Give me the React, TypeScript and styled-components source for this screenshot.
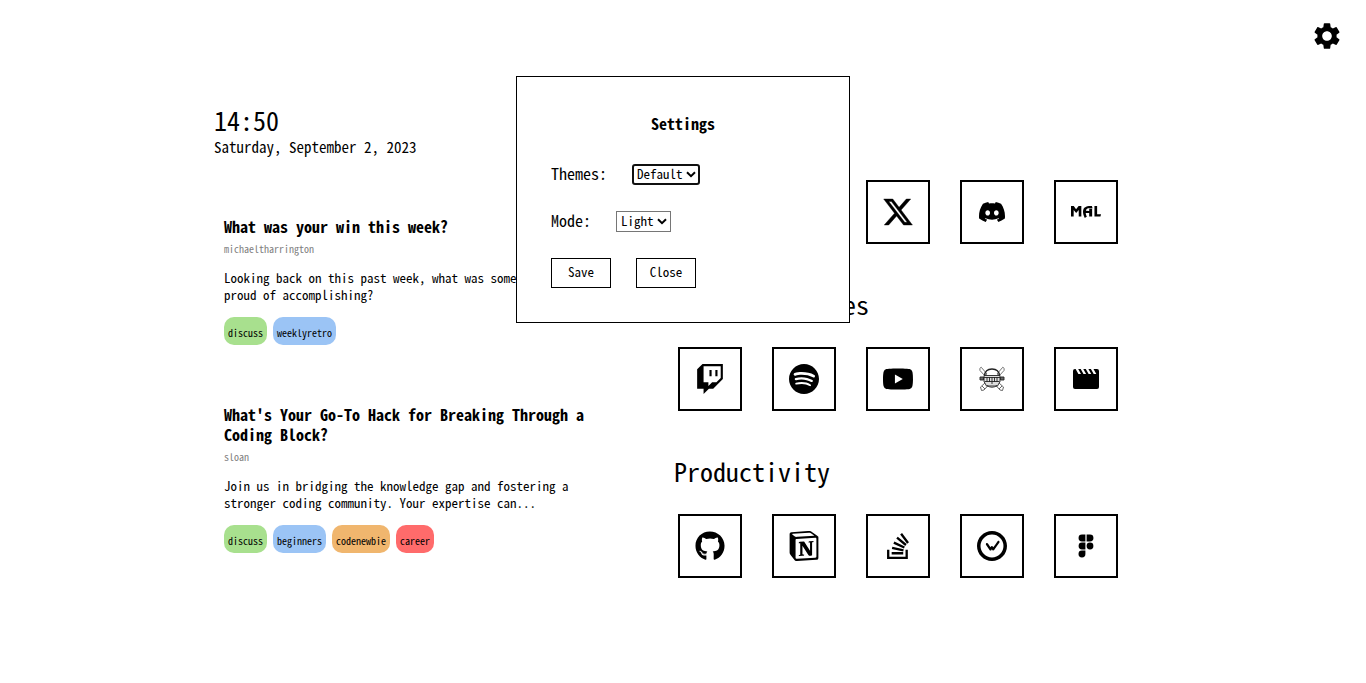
import React from 'react';
import styled, { createGlobalStyle, css } from 'styled-components';
import { FaGithub, FaInstagram, FaReddit } from 'react-icons/fa6';
import { MdSettings } from 'react-icons/md';
import {
  SiDiscord,
  SiMyanimelist,
  SiNotion,
  SiSpotify,
  SiStackoverflow,
  SiTwitch,
  SiWakatime,
  SiYoutube,
} from 'react-icons/si';

const GlobalStyle = createGlobalStyle`
  * { box-sizing: border-box; }
  body {
    margin: 0;
    background: #fff;
    color: #000;
  }
  body, button, select {
    font-family: "Noto Sans Mono CJK JP", "Noto Sans Mono CJK SC", "Liberation Mono", monospace;
  }
`;

const Page = styled.div`
  position: relative;
  padding: 106px 24px 40px;
`;

const SettingsButton = styled.button`
  position: absolute;
  top: 20px;
  right: 23px;
  display: flex;
  padding: 0;
  border: 0;
  background: none;
  color: #000;
  cursor: pointer;
`;

const Content = styled.main`
  display: grid;
  grid-template-columns: minmax(0, 390px) minmax(0, 478px);
  column-gap: 70px;
  max-width: 938px;
  margin: 0 auto;
`;

const Clock = styled.time`
  display: block;
  font-size: 26px;
  line-height: 28px;
`;

const Today = styled.p`
  margin: 3px 0 0;
  font-size: 15px;
  line-height: 20px;
`;

const Feed = styled.section`
  display: flex;
  flex-direction: column;
  gap: 59px;
  padding: 59px 0 0 10px;
`;

const PostTitle = styled.h2`
  margin: 0;
  font-size: 16px;
  line-height: 20px;
`;

const Author = styled.p`
  margin: 5px 0 12px;
  font-size: 10px;
  line-height: 16px;
  color: #808080;
`;

const Summary = styled.p`
  margin: 0;
  font-size: 13px;
  line-height: 17px;
`;

const Tags = styled.ul`
  display: flex;
  gap: 6px;
  margin: 14px 0 0;
  padding: 0;
  list-style: none;
`;

const Tag = styled.li<{ $color: string }>`
  padding: 8px 4px 4px;
  border-radius: 10px;
  background: ${({ $color }) => $color};
  font-size: 10px;
  line-height: 16px;
`;

const Links = styled.div`
  display: flex;
  flex-direction: column;
  gap: 46px;
  padding-top: 74px;
`;

const GroupTitle = styled.h2`
  margin: 0 0 29px;
  font-size: 26px;
  font-weight: 400;
  line-height: 28px;
`;

const Tiles = styled.div`
  display: flex;
  gap: 30px;
  padding-left: 4px;
`;

const Tile = styled.a`
  display: flex;
  flex: none;
  align-items: center;
  justify-content: center;
  width: 64px;
  height: 64px;
  border: 2px solid #000;
  color: #000;
`;

const Dialog = styled.dialog`
  position: absolute;
  top: 76px;
  width: 334px;
  margin: 0 auto;
  padding: 34px;
  border: 1px solid #000;
  background: #fff;
  color: #000;
`;

const DialogTitle = styled.h2`
  margin: 0 0 29px;
  font-size: 16px;
  line-height: 24px;
  text-align: center;
`;

const Field = styled.div`
  display: flex;
  align-items: center;
  gap: 25px;
  height: 21px;
  margin-bottom: 26px;
  font-size: 16px;
`;

const Label = styled.label`
  padding-bottom: 2px;
  line-height: 19px;
`;

const SelectBox = styled.div`
  position: relative;
  display: flex;

  svg {
    position: absolute;
    top: 7px;
    right: 4px;
    pointer-events: none;
  }
`;

const Select = styled.select<{ $active?: boolean }>`
  appearance: none;
  height: 21px;
  padding: 0 16px 2px 4px;
  border: 1px solid #767676;
  border-radius: 0;
  background: #fff;
  color: #000;
  font-size: 13px;
  line-height: 17px;
  ${({ $active }) =>
    $active &&
    css`
      padding: 0 15px 2px 3px;
      border: 2px solid #101010;
      border-radius: 3px;
      line-height: 15px;
    `}
`;

const Actions = styled.div`
  display: flex;
  gap: 25px;
`;

const Button = styled.button`
  width: 60px;
  height: 30px;
  padding: 0 0 3px;
  border: 1px solid #000;
  background: #fff;
  color: #000;
  font-size: 13px;
`;

const Chevron = () => (
  <svg width="10" height="7" viewBox="0 0 10 7" fill="none" stroke="#000" strokeWidth="2">
    <path d="M1 1.3 L5 5.2 L9 1.3" />
  </svg>
);

const XIcon = () => (
  <svg width="32" height="32" viewBox="0 0 24 24" fill="#000" stroke="#000" strokeWidth="0.3">
    <path d="M18.244 2.25h3.308l-7.227 8.26 8.502 11.24H16.17l-5.214-6.817L4.99 21.75H1.68l7.73-8.835L1.254 2.25H8.08l4.713 6.231zm-1.161 17.52h1.833L7.084 4.126H5.117z" />
  </svg>
);

const SkullIcon = () => (
  <svg width="26" height="26" viewBox="0 0 26 26" fill="none" stroke="#222" strokeWidth="0.9">
    <path d="M2.2 1.2 L8 8 L5.5 9.5 L1 4.5 Q0 2 2.2 1.2Z M23.8 1.2 L18 8 L20.5 9.5 L25 4.5 Q26 2 23.8 1.2Z" stroke="#666" />
    <path d="M6 17 L1.5 21 L2.5 24.5 L5 24 L9 19.5 M20 17 L24.5 21 L23.5 24.5 L21 24 L17 19.5 M3 20 L6 23 M23 20 L20 23" stroke="#555" />
    <path d="M5.5 10 Q6 3 13 3 Q20 3 20.5 10" strokeWidth="1.3" />
    <path d="M5 9.5 H21 V15.5 L18.5 20 H7.5 L5 15.5Z" fill="#ddd" />
    <path d="M5 11.5 H21 M5.5 15.5 H20.5 M8 11 V16 M10.5 11 V16 M13 11 V18 M15.5 11 V16 M18 11 V16 M8 19.5 Q13 23 18 19.5" />
    <path d="M1 11 H4.5 V14 H1Z M21.5 11 H25 V14 H21.5Z" fill="#666" />
  </svg>
);

const ClapperIcon = () => (
  <svg width="26" height="20" viewBox="0 0 26 20">
    <rect width="26" height="20" rx="2" fill="#000" />
    <path
      fill="#fff"
      d="M2.6 0 H5.2 L8 5 H5.4Z M7.7 0 H10.3 L13.1 5 H10.5Z M12.8 0 H15.4 L18.2 5 H15.6Z M17.9 0 H20.5 L23.3 5 H20.7Z"
    />
  </svg>
);

const FigmaIcon = () => (
  <svg width="16" height="24" viewBox="0 0 16 24" fill="#000">
    <path d="M7.4 .5 V7.4 H4 A3.45 3.45 0 0 1 4 .5Z M8.6 .5 H12 A3.45 3.45 0 0 1 12 7.4 H8.6Z M7.4 8.6 V15.4 H4 A3.4 3.4 0 0 1 4 8.6Z M7.4 16.6 V20 A3.45 3.45 0 1 1 4 16.6Z" />
    <circle cx="12" cy="12" r="3.4" />
  </svg>
);

const posts = [
  {
    title: 'What was your win this week?',
    author: 'michaeltharrington',
    summary: "Looking back on this past week, what was something you're proud of accomplishing?",
    tags: [['discuss', '#a8e08e'], ['weeklyretro', '#9bc4f5']],
  },
  {
    title: "What's Your Go-To Hack for Breaking Through a Coding Block?",
    author: 'sloan',
    summary: 'Join us in bridging the knowledge gap and fostering a stronger coding community. Your expertise can...',
    tags: [['discuss', '#a8e08e'], ['beginners', '#9bc4f5'], ['codenewbie', '#f0b66e'], ['career', '#ff6b6b']],
  },
];

const groups: { title?: string; links: [string, React.ReactNode][] }[] = [
  {
    links: [
      ['Instagram', <FaInstagram size={30} />],
      ['Reddit', <FaReddit size={30} />],
      ['X', <XIcon />],
      ['Discord', <SiDiscord size={26} />],
      ['MyAnimeList', <SiMyanimelist size={30} />],
    ],
  },
  {
    title: 'Streaming Sites',
    links: [
      ['Twitch', <SiTwitch size={30} />],
      ['Spotify', <SiSpotify size={30} />],
      ['YouTube', <SiYoutube size={30} />],
      ['Anime', <SkullIcon />],
      ['Movies', <ClapperIcon />],
    ],
  },
  {
    title: 'Productivity',
    links: [
      ['GitHub', <FaGithub size={30} />],
      ['Notion', <SiNotion size={30} />],
      ['Stack Overflow', <SiStackoverflow size={26} />],
      ['WakaTime', <SiWakatime size={30} />],
      ['Figma', <FigmaIcon />],
    ],
  },
];

export default function App() {
  return (
    <Page>
      <GlobalStyle />
      <SettingsButton aria-label="Open settings">
        <MdSettings size={32} />
      </SettingsButton>
      <Content>
        <div>
          <Clock>14:50</Clock>
          <Today>Saturday, September 2, 2023</Today>
          <Feed>
            {posts.map((post) => (
              <article key={post.title}>
                <PostTitle>{post.title}</PostTitle>
                <Author>{post.author}</Author>
                <Summary>{post.summary}</Summary>
                <Tags>
                  {post.tags.map(([name, color]) => (
                    <Tag key={name} $color={color}>{name}</Tag>
                  ))}
                </Tags>
              </article>
            ))}
          </Feed>
        </div>
        <Links>
          {groups.map((group, index) => (
            <nav key={index}>
              {group.title && <GroupTitle>{group.title}</GroupTitle>}
              <Tiles>
                {group.links.map(([name, icon]) => (
                  <Tile key={name} href="#" aria-label={name}>{icon}</Tile>
                ))}
              </Tiles>
            </nav>
          ))}
        </Links>
      </Content>
      <Dialog open aria-labelledby="settings-title">
        <DialogTitle id="settings-title">Settings</DialogTitle>
        <Field>
          <Label htmlFor="theme">Themes:</Label>
          <SelectBox>
            <Select id="theme" $active>
              <option>Default</option>
            </Select>
            <Chevron />
          </SelectBox>
        </Field>
        <Field>
          <Label htmlFor="mode">Mode:</Label>
          <SelectBox>
            <Select id="mode">
              <option>Light</option>
              <option>Dark</option>
            </Select>
            <Chevron />
          </SelectBox>
        </Field>
        <Actions>
          <Button>Save</Button>
          <Button>Close</Button>
        </Actions>
      </Dialog>
    </Page>
  );
}
